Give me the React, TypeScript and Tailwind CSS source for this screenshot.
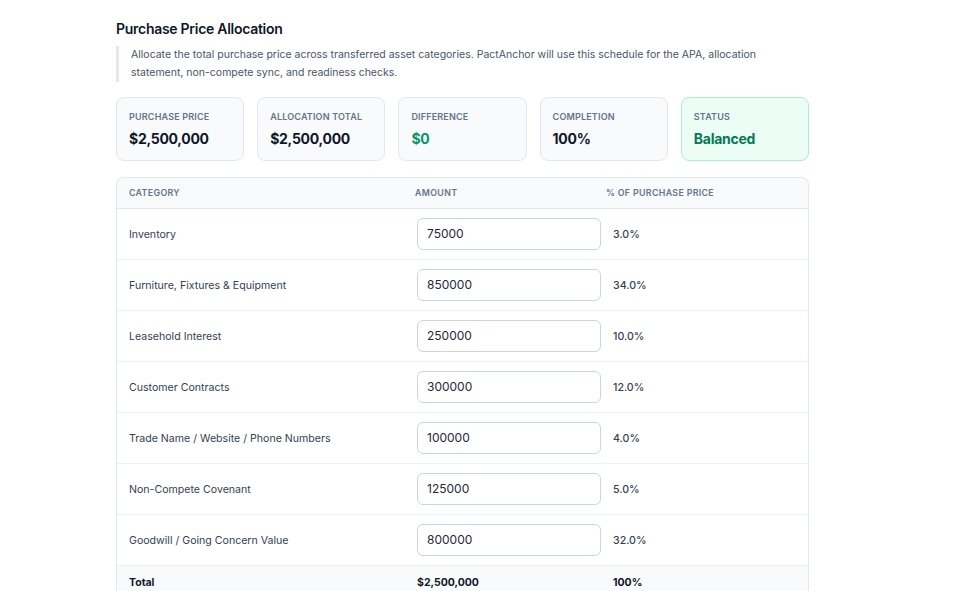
import React from 'react';

interface Allocation {
  category: string;
  amount: number;
}

const PURCHASE_PRICE = 2500000;

const ROWS: Allocation[] = [
  { category: 'Inventory', amount: 75000 },
  { category: 'Furniture, Fixtures & Equipment', amount: 850000 },
  { category: 'Leasehold Interest', amount: 250000 },
  { category: 'Customer Contracts', amount: 300000 },
  { category: 'Trade Name / Website / Phone Numbers', amount: 100000 },
  { category: 'Non-Compete Covenant', amount: 125000 },
  { category: 'Goodwill / Going Concern Value', amount: 800000 },
];

const fmt = (n: number) => '$' + n.toLocaleString('en-US');

/** 汇总卡片 */
const StatCard: React.FC<{ label: string; value: string; tone?: 'default' | 'green' | 'ok' }> = ({
  label,
  value,
  tone = 'default',
}) => {
  const box =
    tone === 'ok' ? 'bg-[#ecfdf5] border-[#a7f3d0]' : 'bg-[#f8fafc] border-[#e2e8f0]';
  const text =
    tone === 'ok' ? 'text-[#047857]' : tone === 'green' ? 'text-[#059669]' : 'text-[#0f172a]';
  return (
    <div className={`h-[64px] rounded-[8px] border px-[12px] pt-[13px] ${box}`}>
      <div className="text-[9px] font-semibold uppercase tracking-[0.02em] text-[#64748b] leading-[12px]">
        {label}
      </div>
      <div className={`mt-[7px] text-[14px] font-bold leading-[18px] tracking-[-0.02em] ${text}`}>{value}</div>
    </div>
  );
};

export default function App() {
  const [rows, setRows] = React.useState(ROWS);
  const total = rows.reduce((s, r) => s + r.amount, 0);
  const diff = PURCHASE_PRICE - total;

  return (
    <div
      className="min-h-screen bg-white text-[#0f172a]"
      style={{ fontFamily: 'Inter, "Noto Sans", sans-serif' }}
    >
      <div className="ml-[116px] w-[693px] pt-[20px]">
        {/* 标题 */}
        <h2 className="text-[14px] font-semibold leading-[18px] tracking-[-0.02em] text-[#0f172a]">
          Purchase Price Allocation
        </h2>
        <div className="mt-[8px] border-l-[3px] border-[#e2e8f0] pl-[12px] text-[10.5px] leading-[18px] text-[#475569]">
          Allocate the total purchase price across transferred asset categories. PactAnchor will use this
          schedule for the APA, allocation statement, non-compete sync, and readiness checks.
        </div>

        {/* 汇总 */}
        <div className="mt-[15px] grid grid-cols-5 gap-[13px]">
          <StatCard label="Purchase Price" value={fmt(PURCHASE_PRICE)} />
          <StatCard label="Allocation Total" value={fmt(total)} />
          <StatCard label="Difference" value={fmt(diff)} tone="green" />
          <StatCard label="Completion" value={`${Math.round((total / PURCHASE_PRICE) * 100)}%`} />
          <StatCard label="Status" value={diff === 0 ? 'Balanced' : 'Unbalanced'} tone="ok" />
        </div>

        {/* 表格 */}
        <div className="mt-[16px] overflow-hidden rounded-t-[8px] border border-b-0 border-[#e2e8f0]">
          <div className="grid h-[31px] grid-cols-[286px_191px_1fr] items-center border-b border-[#e2e8f0] bg-[#f8fafc] text-[8.8px] font-semibold uppercase tracking-[0.04em] text-[#64748b]">
            <div className="pl-[12px]">Category</div>
            <div className="pl-[12px]">Amount</div>
            <div className="pl-[12px]">% of Purchase Price</div>
          </div>
          {rows.map((r, i) => (
            <div
              key={r.category}
              className="grid h-[51px] grid-cols-[286px_191px_1fr] items-center border-b border-[#eef2f6] text-[10.6px]"
            >
              <div className="pl-[12px] pt-[2px] text-[#334155]">{r.category}</div>
              <div className="pl-[14px]">
                <input
                  value={r.amount}
                  onChange={(e) => {
                    const v = Number(e.target.value.replace(/[^0-9]/g, '')) || 0;
                    setRows(rows.map((x, j) => (j === i ? { ...x, amount: v } : x)));
                  }}
                  className="h-[32px] w-[184px] rounded-[6px] border border-[#cbd5e1] bg-white px-[9px] pb-[1px] text-[12px] text-[#1e293b] outline-none"
                />
              </div>
              <div className="pl-[19px] pt-[2px] font-medium text-[#334155]">
                {((r.amount / PURCHASE_PRICE) * 100).toFixed(1)}%
              </div>
            </div>
          ))}
          <div className="grid h-[40px] grid-cols-[286px_191px_1fr] items-start bg-[#f8fafc] pt-[9px] text-[10.5px] font-bold text-[#0f172a]">
            <div className="pl-[12px]">Total</div>
            <div className="pl-[14px]">{fmt(total)}</div>
            <div className="pl-[19px]">{Math.round((total / PURCHASE_PRICE) * 100)}%</div>
          </div>
        </div>
      </div>
    </div>
  );
}
